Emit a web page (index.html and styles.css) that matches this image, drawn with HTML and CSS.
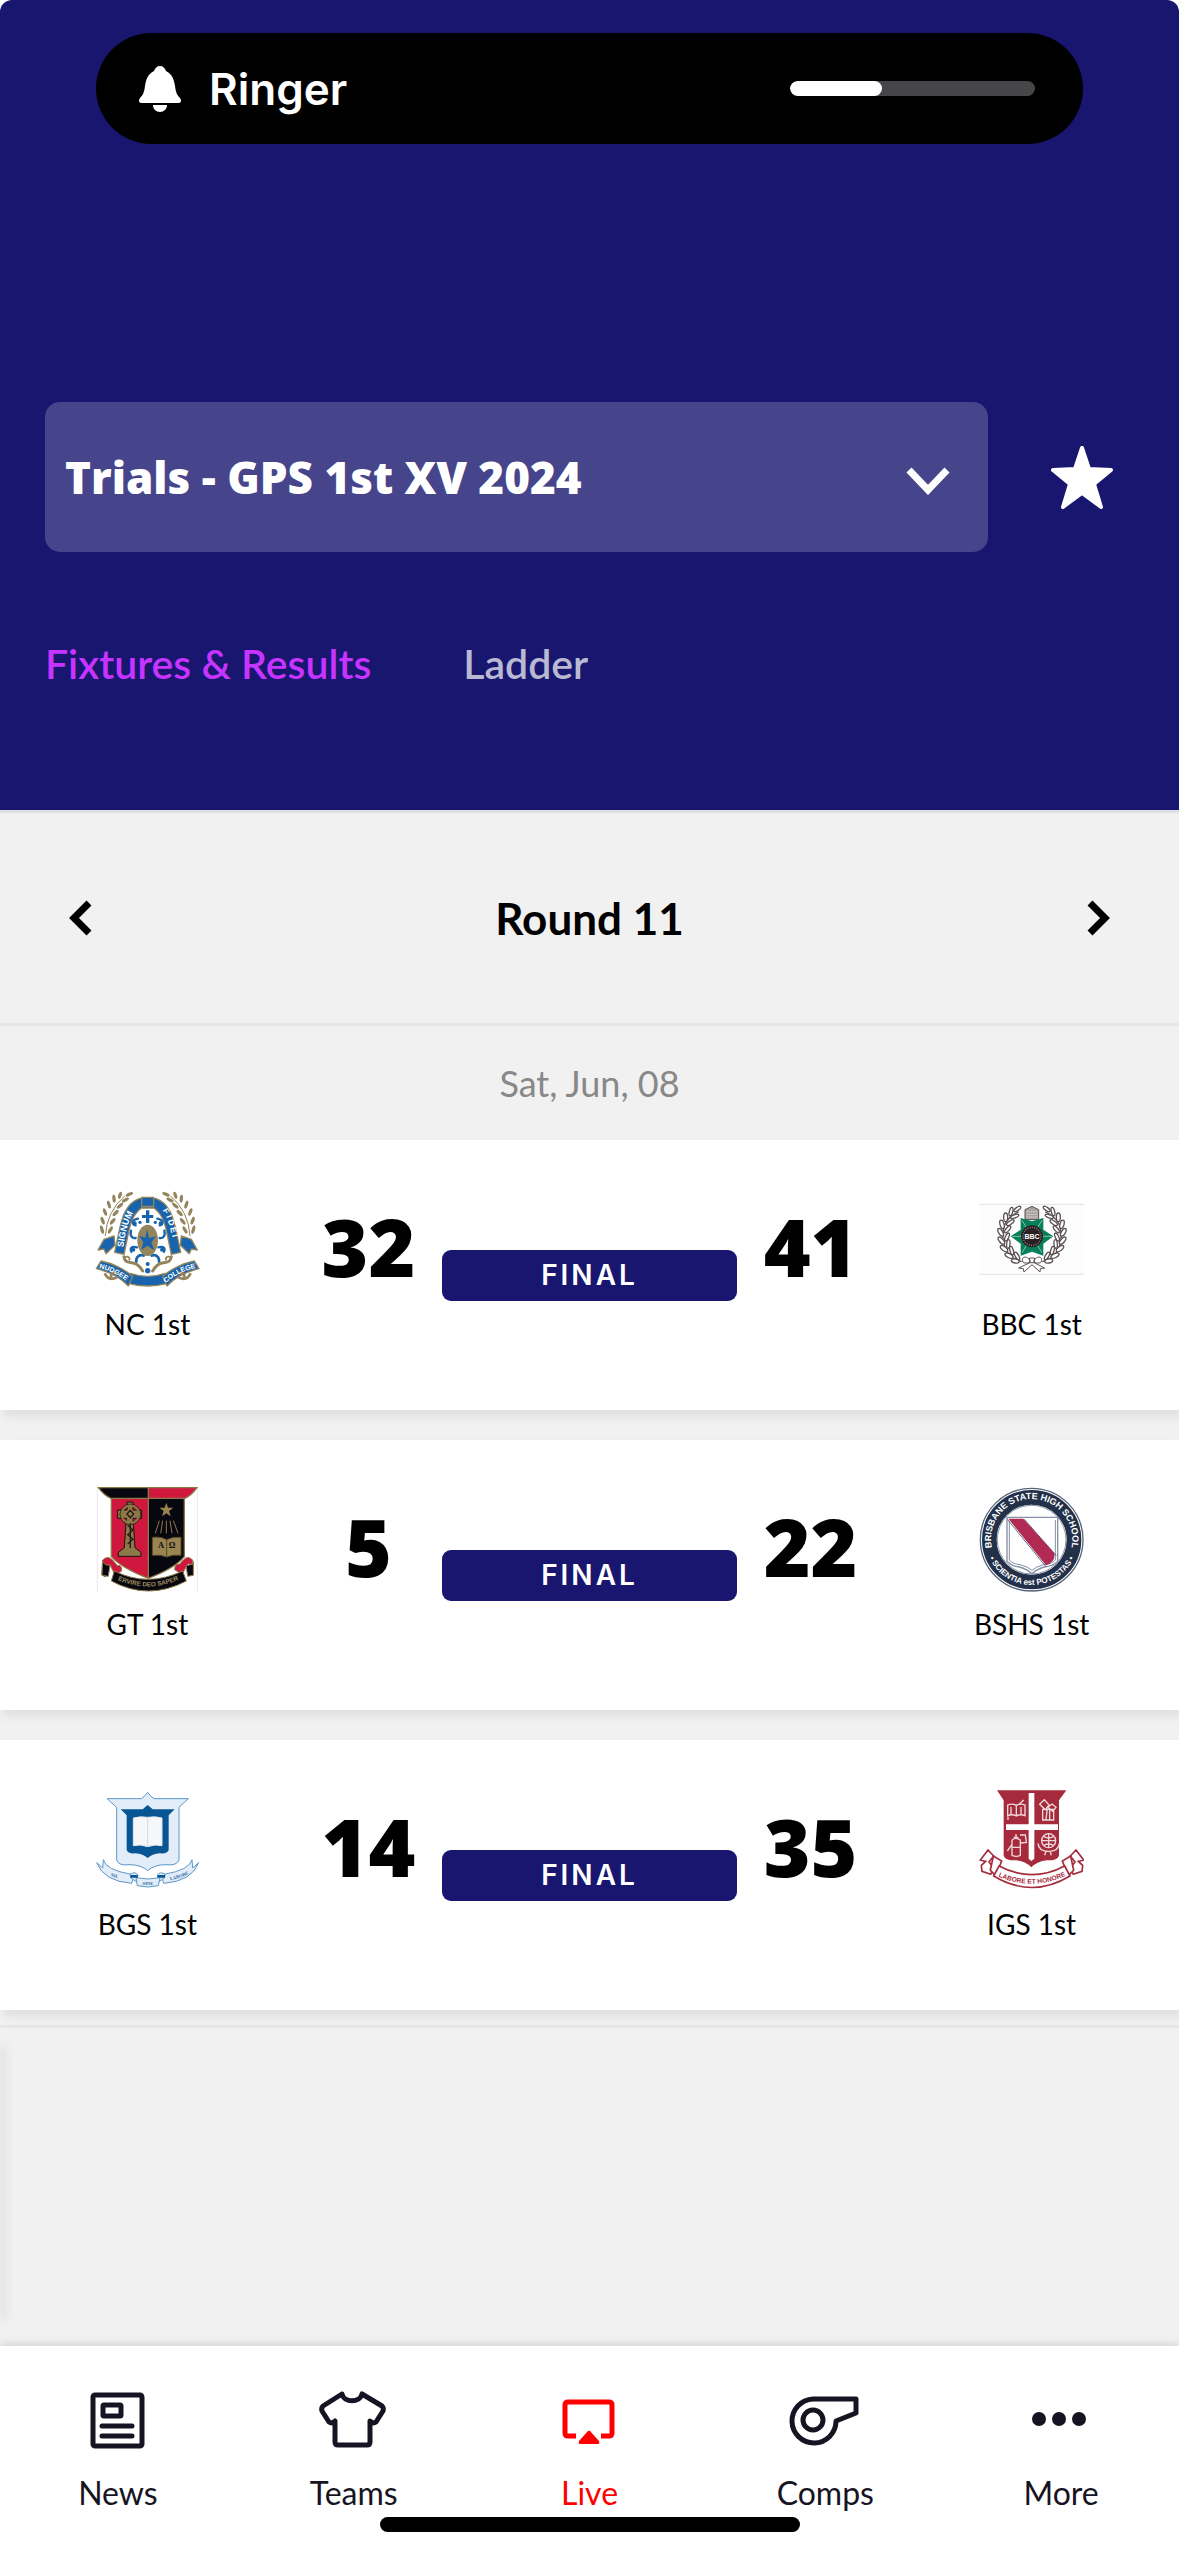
FILE: index.html
```html
<!DOCTYPE html>
<html lang="en">
<head>
<meta charset="utf-8">
<meta name="viewport" content="width=device-width, initial-scale=1">
<title>Fixtures &amp; Results</title>
<link rel="stylesheet" href="styles.css">
</head>
<body>
<header class="header">
  <div class="ringer">
    <svg class="ringer-icon" viewBox="0 0 42 46" aria-hidden="true"><path d="M21 0c3 0 5 2 6 5 6 3 8 8 9 15 1 7 2 9 5 12 2 3 1 5-2 5H3c-3 0-4-2-2-5 3-3 4-5 5-12 1-7 3-12 9-15 1-3 3-5 6-5zM14 39h14c0 4-3 7-7 7s-7-3-7-7z"/></svg>
    <label class="ringer-label" for="level">Ringer</label>
    <progress class="ringer-level" id="level" max="245" value="92"></progress>
  </div>
  <div class="picker">
    <div class="picker-field">
      <select class="picker-select" aria-label="Competition"><option>Trials - GPS 1st XV 2024</option></select>
      <svg class="picker-chevron" viewBox="0 0 44 28" aria-hidden="true"><path d="M3 3l19 20L41 3"/></svg>
    </div>
    <button class="favourite" aria-label="Favourite">
      <svg class="favourite-icon" viewBox="0 0 62 63" aria-hidden="true"><path d="M31 2l7 21 22 1-17 14 7 23-19-14-19 14 7-23L2 24l22-1z"/></svg>
    </button>
  </div>
  <nav class="tabs">
    <a class="tab tab-active" href="#fixtures">Fixtures &amp; Results</a>
    <a class="tab" href="#ladder">Ladder</a>
  </nav>
</header>
<main class="main">
  <div class="round">
    <button class="round-button" aria-label="Previous round"><svg class="round-arrow" viewBox="0 0 23 36"><path d="M20 3L5 18l15 15"/></svg></button>
    <h1 class="round-title">Round 11</h1>
    <button class="round-button" aria-label="Next round"><svg class="round-arrow" viewBox="0 0 23 36"><path d="M3 3l15 15L3 33"/></svg></button>
  </div>
  <section class="fixtures" id="fixtures">
    <h2 class="date">Sat, Jun, 08</h2>
    <div class="matches">
      <article class="match">
        <div class="team">
          <svg class="crest" viewBox="75 81 315 315" aria-hidden="true">
            <defs>
              <g id="leaf-branch" fill="#94845c">
                <ellipse cx="150" cy="106" rx="5" ry="11" transform="rotate(18 150 106)"/>
                <ellipse cx="132" cy="116" rx="5" ry="12" transform="rotate(-5 132 116)"/>
                <ellipse cx="117" cy="134" rx="5" ry="12" transform="rotate(-18 117 134)"/>
                <ellipse cx="105" cy="156" rx="5" ry="12" transform="rotate(-20 105 156)"/>
                <ellipse cx="98" cy="182" rx="5" ry="12" transform="rotate(-20 98 182)"/>
                <ellipse cx="96" cy="209" rx="5" ry="13" transform="rotate(-15 96 209)"/>
                <ellipse cx="178" cy="103" rx="5" ry="12" transform="rotate(65 178 103)"/>
                <ellipse cx="166" cy="120" rx="5" ry="12" transform="rotate(60 166 120)"/>
                <ellipse cx="150" cy="137" rx="5" ry="12" transform="rotate(50 150 137)"/>
                <ellipse cx="137" cy="159" rx="5" ry="12" transform="rotate(45 137 159)"/>
                <ellipse cx="128" cy="184" rx="5" ry="12" transform="rotate(38 128 184)"/>
                <ellipse cx="121" cy="210" rx="5" ry="12" transform="rotate(30 121 210)"/>
                <path d="M164 108Q110 155 106 228" fill="none" stroke="#94845c" stroke-width="3"/>
              </g>
              <g id="nudgee-scroll">
                <path d="M204 176c-22 4-17 18-7 20M183 212c-4 16 4 24 14 22M201 262c-18-5-21 5-17 13" fill="none" stroke="#1763ae" stroke-width="7" stroke-linecap="round"/>
                <path d="M199 305c-2-14 10-24 22-18" fill="none" stroke="#1763ae" stroke-width="8" stroke-linecap="round"/>
                <circle cx="194" cy="190" r="6" fill="#1763ae"/><circle cx="210" cy="187" r="5" fill="#1763ae"/><circle cx="190" cy="269" r="6" fill="#1763ae"/>
                <path d="M162 290c2 18 16 17 28 19 12 2 21 12 28 24" fill="none" stroke="#94845c" stroke-width="9" stroke-linecap="round"/>
                <path d="M165 291c10-3 17 3 12 10" fill="none" stroke="#94845c" stroke-width="5"/>
              </g>
            </defs>
            <use href="#leaf-branch"/><use href="#leaf-branch" transform="matrix(-1 0 0 1 466 0)"/>
            <g fill="#1763ae" stroke="#94845c" stroke-width="4" stroke-linejoin="round">
              <path d="M132 228l-30 10-18 32 18-3 6 14 27-25zM334 228l30 10 18 32-18-3-6 14-27-25z"/>
              <path d="M210 115c-42 14-54 55-64 105l-12 57 28 6 10-48c8-40 12-67 42-91h38c30 24 34 51 42 91l10 48 28-6-12-57c-10-50-22-91-64-105z"/>
              <path d="M215 112h36v27h-36zM180 340q53 18 106 0l7 30q-60 16-120 0z"/>
              <path d="M93 303c33 6 76 27 95 47l-13 28c-22-24-58-43-96-52zM373 303c-33 6-76 27-95 47l13 28c22-24 58-43 96-52z"/>
            </g>
            <path d="M104 340c10 20 25 20 40 10M124 353c-4-10 6-18 16-12M362 340c-10 20-25 20-40 10M342 353c4-10-6-18-16-12" fill="none" stroke="#94845c" stroke-width="8"/>
            <use href="#nudgee-scroll"/><use href="#nudgee-scroll" transform="matrix(-1 0 0 1 466 0)"/>
            <path d="M228 151h10v14h12v9h-12v15h-10v-15h-12v-9h12z" fill="#1763ae"/>
            <ellipse cx="233" cy="241" rx="31" ry="47" fill="#94845c"/>
            <path d="M231 208l6 26 21-5-14 18 9 24-21-14-18 13 6-24-12-18 18 5z" fill="#1763ae"/>
            <circle cx="233" cy="312" r="6" fill="#1763ae"/><circle cx="233" cy="332" r="8" fill="#1763ae"/>
            <path id="nc-a" d="M160 262C166 220 175 170 202 145" fill="none"/><path id="nc-b" d="M277 151C295 175 303 215 316 267" fill="none"/>
            <path id="nc-c" d="M87 325Q135 334 178 370" fill="none"/><path id="nc-d" d="M287 369Q330 332 380 324" fill="none"/>
            <g class="crest-sans" fill="#fff" font-size="21">
              <text font-size="27"><textPath href="#nc-a">SIGNUM</textPath></text><text font-size="25" letter-spacing="6"><textPath href="#nc-b">FIDEI</textPath></text>
              <text><textPath href="#nc-c">NUDGEE</textPath></text><text><textPath href="#nc-d">COLLEGE</textPath></text>
            </g>
          </svg>
          <span class="team-name">NC 1st</span>
        </div>
        <strong class="score">32</strong><span class="status">FINAL</span><strong class="score">41</strong>
        <div class="team">
          <svg class="crest" viewBox="117 81 315 315" aria-hidden="true">
            <defs>
              <g id="laurel" fill="#fff" stroke="#5a5050" stroke-width="4">
                <path d="M236 156Q180 180 190 245Q200 295 245 305" fill="none"/>
                <ellipse cx="232" cy="147" rx="5" ry="12" transform="rotate(55 232 147)"/><ellipse cx="213" cy="155" rx="5" ry="13" transform="rotate(15 213 155)"/>
                <ellipse cx="224" cy="169" rx="5" ry="13" transform="rotate(70 224 169)"/><ellipse cx="197" cy="172" rx="6" ry="13" transform="rotate(0 197 172)"/>
                <ellipse cx="211" cy="188" rx="5" ry="13" transform="rotate(55 211 188)"/><ellipse cx="186" cy="193" rx="6" ry="13" transform="rotate(-15 186 193)"/>
                <ellipse cx="203" cy="208" rx="5" ry="13" transform="rotate(40 203 208)"/><ellipse cx="182" cy="217" rx="6" ry="13" transform="rotate(-30 182 217)"/>
                <ellipse cx="201" cy="231" rx="5" ry="13" transform="rotate(25 201 231)"/><ellipse cx="184" cy="242" rx="6" ry="13" transform="rotate(-40 184 242)"/>
                <ellipse cx="205" cy="252" rx="5" ry="13" transform="rotate(5 205 252)"/><ellipse cx="192" cy="266" rx="6" ry="13" transform="rotate(-52 192 266)"/>
                <ellipse cx="215" cy="272" rx="5" ry="13" transform="rotate(-15 215 272)"/><ellipse cx="207" cy="287" rx="6" ry="13" transform="rotate(-65 207 287)"/>
                <ellipse cx="231" cy="288" rx="5" ry="13" transform="rotate(-30 231 288)"/><ellipse cx="226" cy="303" rx="6" ry="12" transform="rotate(-80 226 303)"/>
              </g>
            </defs>
            <path d="M117 132h315v212H117z" fill="#fdfdfd"/><path d="M117 133h315M117 343h315" stroke="#e2e2e2" stroke-width="3"/>
            <use href="#laurel"/><use href="#laurel" transform="matrix(-1 0 0 1 552 0)"/>
            <path d="M255 149l21-10 20 10v30h-41z" fill="#a9a3a3" stroke="#5a5050" stroke-width="3"/>
            <path d="M260 155h32M260 163h32M260 171h32" stroke="#e9e6e6" stroke-width="3" stroke-dasharray="3 3"/>
            <path d="M276 184l34-10v35l30 20-30 22v36l-34-12-34 12v-36l-30-22 30-20v-35z" fill="#087f5b"/>
            <path d="M246 181l60 97M306 181l-60 97M216 229h120" stroke="#bfe3d5" stroke-width="2"/>
            <circle cx="276" cy="229" r="33" fill="#2a2023"/><circle cx="276" cy="229" r="27" fill="none" stroke="#8b8384" stroke-width="4" stroke-dasharray="3 4"/>
            <text class="crest-sans" x="276" y="237" font-size="21" fill="#fff" text-anchor="middle">BBC</text>
            <path d="M270 301c-8-12-22-13-23-2-1 12 14 13 23 6zM282 301c8-12 22-13 23-2 1 12-14 13-23 6zM269 294h14v14h-14zM270 308l-34 16 14 2 2 10 24-22M282 308l32 16-13 2-1 10-24-22" fill="#fff" stroke="#5a5050" stroke-width="3"/>
          </svg>
          <span class="team-name">BBC 1st</span>
        </div>
      </article>
      <article class="match">
        <div class="team">
          <svg class="crest" viewBox="75 81 315 315" aria-hidden="true">
            <path d="M82 82v314M382 82v314" stroke="#dcdcdc" stroke-width="2"/>
            <path d="M85 83H235V116H123C106 108 95 96 85 83z" fill="#07070f"/><path d="M235 83H381C372 97 362 108 344 116H235z" fill="#d0183f"/>
            <path d="M124 116H235V355C190 338 150 318 124 290z" fill="#d0183f"/><path d="M235 116H343V290C320 318 280 338 235 355z" fill="#07070f"/>
            <path d="M85 83H381C370 98 360 108 343 116V290C320 318 280 338 235 355C190 338 150 318 124 290V116C106 108 96 98 85 83zM124 115H343M235 83V355" fill="none" stroke="#8d7847" stroke-width="4"/>
            <path d="M171 126h18v24h26v25h-26l6 88 18 14v12h-68v-12l18-14 6-88h-26v-25h28z" fill="#8d7847" stroke="#17110e" stroke-width="3"/>
            <circle cx="181" cy="163" r="27" fill="none" stroke="#8d7847" stroke-width="7"/><circle cx="181" cy="163" r="31" fill="none" stroke="#17110e" stroke-width="2"/>
            <path d="M181 151l10 11-10 11-10-11zM181 190v74M173 196l16 14-16 14 16 14-16 14" fill="none" stroke="#221b16" stroke-width="4"/>
            <path d="M289 128l5 15h16l-13 10 5 16-13-9-13 9 5-16-13-10h16z" fill="#9a8450"/>
            <path d="M268 182l-12 38M278 182l-6 38M289 182v38M300 182l6 38M310 182l14 38" stroke="#8d7847" stroke-width="3"/>
            <path d="M247 232q25-3 43 7 19-10 43-7v54q-25-3-43 5-18-8-43-5zM290 239v50" fill="#9a8450" stroke="#57492b" stroke-width="3"/>
            <text class="crest-serif" x="273" y="264" font-size="25" text-anchor="middle" fill="#07070f">A</text><text class="crest-serif" x="306" y="264" font-size="25" text-anchor="middle" fill="#07070f">Ω</text>
            <g stroke="#8d7847" stroke-width="3"><path d="M98 300q15-15 30 0l14 17q14-4 13 16l-20 11-16-31-13 38-11-7z" fill="#d0183f"/><path d="M98 305q10 15 22 9l-5 35-19-3zM370 305q-10 15-22 9l5 35 17-3z" fill="#07070f"/><path d="M368 300q-15-15-28 0l-12 13q-14-2-14 16l22 14 18-32 13 3z" fill="#d0183f"/>
            <path d="M133 333q100 50 205 0l11 30q-114 60-225 0z" fill="#07070f"/></g>
            <path id="gt-a" d="M138 358Q235 401 331 357" fill="none"/><text class="crest-sans" font-size="19" fill="#a18c60"><textPath href="#gt-a" startOffset="50%" text-anchor="middle">SERVIRE DEO SAPERE</textPath></text>
          </svg>
          <span class="team-name">GT 1st</span>
        </div>
        <strong class="score">5</strong><span class="status">FINAL</span><strong class="score">22</strong>
        <div class="team">
          <svg class="crest" viewBox="117 81 315 315" aria-hidden="true">
            <circle cx="275" cy="239" r="154" fill="#fff" stroke="#56647a" stroke-width="4"/><circle cx="275" cy="239" r="127" fill="none" stroke="#22304a" stroke-width="44"/><circle cx="275" cy="239" r="103" fill="#fff" stroke="#8b97a8" stroke-width="3"/>
            <path id="bs-a" d="M157 270A122 122 0 1 1 393 270" fill="none"/><path id="bs-b" d="M139 268A140 140 0 0 0 411 268" fill="none"/>
            <g class="crest-sans" fill="#fff" text-anchor="middle"><text font-size="27"><textPath href="#bs-a" startOffset="50%">BRISBANE STATE HIGH SCHOOL</textPath></text><text font-size="24"><textPath href="#bs-b" startOffset="50%">• SCIENTIA est POTESTAS •</textPath></text></g>
            <path d="M201 172H353V304Q340 318 313 321Q290 328 276 341Q262 328 238 321Q214 318 201 304z" fill="#fff" stroke="#8390a5" stroke-width="4"/>
            <path d="M208 184V300Q216 311 240 314Q264 320 276 331Q287 320 311 314Q338 311 346 300V180" fill="none" stroke="#8390a5" stroke-width="3"/>
            <path d="M202 178L318 320M253 178L349 287" stroke="#5d6c87" stroke-width="3"/>
            <path d="M205 176H250L343 280Q347 306 318 316z" fill="#b02a54"/>
          </svg>
          <span class="team-name">BSHS 1st</span>
        </div>
      </article>
      <article class="match">
        <div class="team">
          <svg class="crest" viewBox="75 81 315 315" aria-hidden="true">
            <g stroke="#5b97c8" stroke-width="3" fill="#e3edf9">
              <path d="M111 116H214Q222 112 233 97Q244 112 252 116H355L327 142V300Q320 318 289 314Q252 314 233 332Q214 314 177 314Q146 318 140 300V142z"/>
              <path d="M80 308l18 16 2-25q7 31 84 44l9 3-8 24q-84-6-105-62zM386 308l-18 16-2-25q-7 31-84 44l-9 3 8 24q84-6 105-62z"/>
              <path d="M180 343q16-10 24 2l-5 20-16-11zM286 343q-16-10-24 2l5 20 16-11z"/><path d="M198 353q35 8 72 0l-5 24q-31 8-63 0z"/>
            </g>
            <path d="M181 345h22v8h-22zM263 345h22v8h-22z" fill="#075693"/>
            <path d="M152 148H218L233 135L248 148H314L296 166V270Q292 282 270 280Q246 282 233 294Q220 282 196 280Q174 282 170 270V166z" fill="#075693"/>
            <path d="M190 174q22-6 43-2 22-4 43 2v83q-21-5-43 3-21-8-43-3z" fill="#f5f7f8" stroke="#dfe6ea" stroke-width="3"/><path d="M233 172v88" stroke="#d1dae0" stroke-width="3"/>
            <path id="bg-a" d="M121 347Q140 356 165 360" fill="none"/><path id="bg-b" d="M301 361Q330 356 364 338" fill="none"/>
            <g class="crest-serif" fill="#2767a0" font-size="14"><text><textPath href="#bg-a">NIL</textPath></text><text x="234" y="374" text-anchor="middle">SINE</text><text><textPath href="#bg-b">LABORE</textPath></text></g>
          </svg>
          <span class="team-name">BGS 1st</span>
        </div>
        <strong class="score">14</strong><span class="status">FINAL</span><strong class="score">35</strong>
        <div class="team">
          <svg class="crest" viewBox="117 81 315 315" aria-hidden="true">
            <path d="M171 91H379L357 121V287Q352 302 321 301Q292 304 274 322Q257 304 228 301Q196 302 191 287V121z" fill="#a52b3c"/>
            <path d="M266 99h17v94h71v17h-71v86l-9 7-8-7v-86h-68v-17h68z" fill="#fff"/>
            <g fill="none" stroke="#f1dadd" stroke-width="4">
              <path d="M203 135q14-6 26 1 12-7 26-1v32q-14-6-26 1-12-7-26-1zM229 136v32M236 134l15-14M204 170v10M213 141v24M243 141v24"/>
              <path d="M308 148h33v32h-33zM299 133l14-14 14 16-11 14zM336 132l12 10-10 12-14-12zM322 145l-4 34M329 150v30"/>
              <path d="M216 240q12-10 25 0v46q-12 6-25 0zM221 232h14M216 262h25M240 225h16l3 22-18 2M216 253l-14 20M228 222v12"/>
              <circle cx="326" cy="242" r="21"/><path d="M294 250q2 24 32 24t32-24M305 242h42M326 221v42M312 230q14 8 28 0M312 256q14-8 28 0M318 274l-4 12M330 274l4 12"/>
            </g>
            <g fill="#fff" stroke="#a52b3c" stroke-width="5">
              <path d="M121 300l23-30 17 18-14 18 15 19-10 18-26-9-2-18 13-12zM431 300l-23-30-17 18 14 18-15 19 10 18 26-9 2-18-13-12z"/>
              <path d="M160 288l25 15-18 44-16-16zM392 288l-25 15 18 44 16-16z"/>
              <path d="M177 318Q276 370 374 318L390 348Q276 417 161 348z"/>
            </g>
            <path id="ig-a" d="M176 350Q276 393 376 348" fill="none"/><text class="crest-sans" font-size="20" fill="#a52b3c"><textPath href="#ig-a" startOffset="50%" text-anchor="middle">LABORE ET HONORE</textPath></text>
          </svg>
          <span class="team-name">IGS 1st</span>
        </div>
      </article>
    </div>
  </section>
  <div class="next-page"></div>
</main>
<nav class="dock">
  <a class="dock-item" href="#news"><svg class="dock-icon" viewBox="0 0 72 72" aria-hidden="true"><rect x="11" y="11" width="49" height="51" rx="2"/><rect x="21" y="21" width="18" height="11" rx="1"/><path d="M20 42h30M20 52h30" stroke-linecap="round"/></svg>News</a>
  <a class="dock-item" href="#teams"><svg class="dock-icon" viewBox="0 0 72 72" aria-hidden="true"><path d="M24 10L5 22q-2 2-1 5l7 11q3 2 6-1v21q0 3 3 3h29q3 0 3-3V37q3 3 6 1l7-11q1-3-1-5L44 10C42 19 26 19 24 10z"/></svg>Teams</a>
  <a class="dock-item dock-active" href="#live"><svg class="dock-icon" viewBox="0 0 72 72" aria-hidden="true"><path d="M23 52h-8q-3 0-3-3V21q0-3 3-3h41q3 0 3 3v28q0 3-3 3h-8"/><path d="M35 47q1-1 2 0l9 10q1 3-1 3H27q-2 0-1-3z" fill="currentColor" stroke="none"/></svg>Live</a>
  <a class="dock-item" href="#comps"><svg class="dock-icon" viewBox="0 0 72 72" aria-hidden="true"><path d="M24 15h43v14l-20 8a22 22 0 1 1-23-22z"/><circle cx="24" cy="36" r="10"/></svg>Comps</a>
  <a class="dock-item" href="#more"><svg class="dock-icon" viewBox="0 0 72 72" aria-hidden="true"><g fill="currentColor" stroke="none"><circle cx="14" cy="35" r="7"/><circle cx="34" cy="35" r="7"/><circle cx="54" cy="35" r="7"/></g></svg>More</a>
  <span class="home-bar"></span>
</nav>
</body>
</html>
```
FILE: styles.css
```css
* { box-sizing: border-box; }
body {
  margin: 0;
  min-height: 100vh;
  display: flex;
  flex-direction: column;
  background: #fff;
  color: #000;
  font-family: Lato, "Liberation Sans", sans-serif;
}
button { padding: 0; border: 0; background: none; color: inherit; }
a { text-decoration: none; }

.header {
  padding: 33px 45px 0;
  border-bottom: 3px solid #dde1e6;
  border-radius: 12px 12px 0 0;
  background: #18166f;
}
.ringer {
  display: flex;
  align-items: center;
  height: 111px;
  margin: 0 51px;
  padding: 0 48px 0 43px;
  border-radius: 56px;
  background: #000;
  color: #fff;
  font-family: Inter, "Liberation Sans", sans-serif;
}
.ringer-icon { width: 42px; height: 46px; fill: currentColor; }
.ringer-label { margin-left: 28px; font-size: 44px; font-weight: 600; }
.ringer-level {
  appearance: none;
  width: 245px;
  height: 15px;
  margin-left: auto;
  border: 0;
  border-radius: 8px;
  overflow: hidden;
  background: #464648;
}
.ringer-level::-webkit-progress-bar { background: #464648; }
.ringer-level::-webkit-progress-value { border-radius: 8px; background: #fff; }

.picker { display: flex; align-items: center; margin-top: 258px; }
.picker-field { flex: 1; display: grid; align-items: center; }
.picker-select {
  grid-area: 1 / 1;
  appearance: none;
  width: 100%;
  height: 150px;
  padding: 0 100px 0 20px;
  border: 0;
  border-radius: 15px;
  background: #46458c;
  color: #fff;
  font: 800 44px "Open Sans", "Liberation Sans", sans-serif;
}
.picker-chevron {
  grid-area: 1 / 1;
  justify-self: end;
  width: 44px;
  height: 28px;
  margin: 8px 38px 0 0;
  fill: none;
  stroke: #fff;
  stroke-width: 7;
  pointer-events: none;
}
.favourite { margin: 0 21px 0 63px; }
.favourite-icon { display: block; width: 62px; height: 63px; fill: #fff; stroke: #fff; stroke-width: 4; stroke-linejoin: round; }

.tabs { display: flex; gap: 92px; height: 258px; padding-top: 87px; }
.tab { color: #b9b9d3; font-size: 41px; font-weight: 600; line-height: 50px; }
.tab-active { color: #c834ff; }

.main { flex: 1; background: #f1f1f1; }
.round {
  display: flex;
  align-items: center;
  justify-content: space-between;
  height: 213px;
  padding: 0 69px;
  border-bottom: 3px solid #e6e6e6;
}
.round-arrow { display: block; width: 23px; height: 36px; fill: none; stroke: currentColor; stroke-width: 7; }
.round-title { margin: 0; font-size: 44px; font-weight: 700; line-height: 54px; }
.fixtures { padding-bottom: 15px; border-bottom: 3px solid #e6e6e6; }
.date { margin: 0; color: #888; font-size: 36px; font-weight: 400; line-height: 114px; text-align: center; }
.matches { display: grid; gap: 30px; }
.match {
  display: grid;
  grid-template-columns: 2fr 1fr 2fr 1fr 2fr;
  height: 270px;
  padding-top: 47px;
  background: #fff;
  box-shadow: 3px 6px 10px rgba(0, 0, 0, 0.08);
}
.team { display: flex; flex-direction: column; align-items: center; gap: 14px; }
.crest { width: 105px; height: 105px; }
.crest-sans { font-family: "Liberation Sans", sans-serif; font-weight: 700; }
.crest-serif { font-family: "Liberation Serif", serif; font-weight: 700; }
.team-name { font-size: 28px; line-height: 36px; }
.score { padding-top: 11px; font-family: "Open Sans", "Liberation Sans", sans-serif; font-size: 80px; font-weight: 800; line-height: 96px; text-align: center; }
.status {
  height: 51px;
  margin-top: 63px;
  border-radius: 9px;
  background: #18166f;
  color: #fff;
  font-family: Inter, "Liberation Sans", sans-serif;
  font-size: 28px;
  font-weight: 600;
  line-height: 51px;
  letter-spacing: 3px;
  text-align: center;
}
.next-page { width: 0; height: 270px; margin-top: 14px; box-shadow: 3px 6px 10px 3px rgba(0, 0, 0, 0.08); }

.dock {
  position: relative;
  display: grid;
  grid-template-columns: repeat(5, 1fr);
  height: 210px;
  padding-top: 38px;
  background: #fff;
  box-shadow: 0 -2px 8px rgba(0, 0, 0, 0.12);
}
.dock-item {
  display: flex;
  flex-direction: column;
  align-items: center;
  gap: 18px;
  color: #161423;
  font-size: 32px;
  line-height: 38px;
}
.dock-active { color: #f00; }
.dock-icon { width: 72px; height: 72px; fill: none; stroke: currentColor; stroke-width: 5; stroke-linejoin: round; }
.home-bar {
  position: absolute;
  left: 50%;
  bottom: 24px;
  width: 420px;
  height: 15px;
  margin-left: -210px;
  border-radius: 8px;
  background: #000;
}
```
